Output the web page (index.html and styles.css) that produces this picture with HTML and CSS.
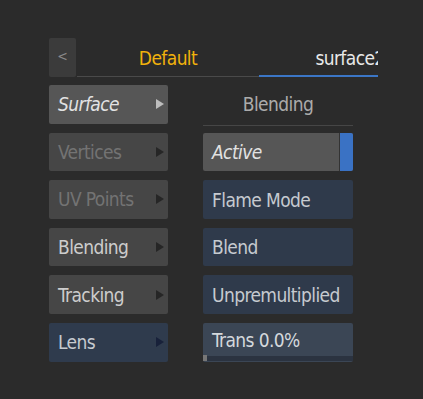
FILE: index.html
```html
<!DOCTYPE html>
<html lang="en">
<head>
    <meta charset="UTF-8">
    <meta name="viewport" content="width=device-width, initial-scale=1.0">
    <title>Surface</title>
    <link rel="stylesheet" href="styles.css">
</head>
<body>

    <div class="panel">
        <!-- top bar: back button + tabs -->
        <div class="topbar">
            <button class="back">&lt;</button>
            <div class="tabs">
                <div class="tab current">Default</div>
                <div class="tab active">surface2</div>
            </div>
        </div>

        <div class="columns">
            <div class="menu">
                <div class="item selected"><span>Surface</span><i class="arrow"></i></div>
                <div class="item disabled"><span>Vertices</span><i class="arrow"></i></div>
                <div class="item disabled"><span>UV Points</span><i class="arrow"></i></div>
                <div class="item"><span>Blending</span><i class="arrow"></i></div>
                <div class="item"><span>Tracking</span><i class="arrow"></i></div>
                <div class="item blue"><span>Lens</span><i class="arrow"></i></div>
            </div>

            <div class="settings">
                <div class="heading">Blending</div>
                <div class="toggle"><span>Active</span><i class="flag"></i></div>
                <div class="field">Flame Mode</div>
                <div class="field">Blend</div>
                <div class="field">Unpremultiplied</div>
                <div class="field slider">
                    <span>Trans 0.0%</span>
                    <div class="track"><div class="knob"></div></div>
                </div>
            </div>
        </div>
    </div>

</body>
</html>
```

FILE: styles.css
```css
body {
    margin: 0;
    background: #2b2b2b;
    font-family: "DejaVu Sans Condensed", "DejaVu Sans", sans-serif;
    font-size: 19px;
    letter-spacing: -0.6px;
    color: #c8c8c8;
}
.panel {
    padding: 38px 0 0 49px;
}
.topbar {
    display: flex;
    gap: 1px;
    height: 39px;
}
.back {
    width: 27px;
    height: 39px;
    padding: 0 0 4px;
    border: none;
    border-radius: 2px;
    background: #3b3b3b;
    color: #8a8a8a;
    font-family: inherit;
    font-size: 14px;
}
.tabs {
    display: flex;
    width: 301px;
    overflow: hidden;
}
.tab {
    flex: 0 0 182px;
    display: flex;
    align-items: center;
    justify-content: center;
    padding-top: 2px;
    box-sizing: border-box;
    border-bottom: 1px solid #4a4a4a;
    color: #e8e8e8;
}
.tab.current {
    color: #f2b20c;
}
.tab.active {
    border-bottom: 2px solid #3b76c6;
    padding-top: 3px;
}
.columns {
    display: flex;
    gap: 35px;
    margin-top: 8px;
}
.menu, .settings {
    display: flex;
    flex-direction: column;
    gap: 9px;
}
.menu {
    width: 119px;
}
.settings {
    width: 150px;
}
.item, .field, .toggle {
    height: 38.6px;
    box-sizing: border-box;
    border-radius: 2px;
    display: flex;
    align-items: center;
    padding-left: 9px;
}
.item {
    justify-content: space-between;
    padding-right: 4px;
    background: #464646;
    color: #cdcdcd;
}
.item.selected {
    background: #565656;
    color: #e2e2e2;
    font-style: italic;
}
.item.disabled {
    color: #737373;
}
.item.blue {
    background: #2f3b4d;
    color: #c6cad0;
}
.arrow {
    width: 0;
    height: 0;
    border-top: 5px solid transparent;
    border-bottom: 5px solid transparent;
    border-left: 8px solid #262626;
}
.item.selected .arrow {
    border-left-color: #bdbdbd;
}
.item.blue .arrow {
    border-left-color: #18213a;
}
.heading {
    height: 41px;
    margin-bottom: -2.4px;
    box-sizing: border-box;
    border-bottom: 1px solid #464646;
    display: flex;
    align-items: center;
    justify-content: center;
    padding-bottom: 2px;
    color: #ababab;
}
.toggle {
    background: #565656;
    color: #e2e2e2;
    font-style: italic;
    padding-right: 0;
    justify-content: space-between;
    overflow: hidden;
}
.flag {
    align-self: stretch;
    width: 13px;
    border-left: 1px solid #333;
    background: #3a72c4;
}
.field {
    background: #2f3a4b;
    color: #c6cad0;
}
.slider {
    position: relative;
    background: #3b4655;
    align-items: flex-start;
    padding-top: 6px;
    color: #d4d8dc;
}
.track {
    position: absolute;
    left: 0;
    right: 0;
    bottom: 1px;
    height: 5px;
    background: #2b3340;
}
.knob {
    width: 4px;
    height: 6px;
    margin-top: -1px;
    background: #777;
}
```
